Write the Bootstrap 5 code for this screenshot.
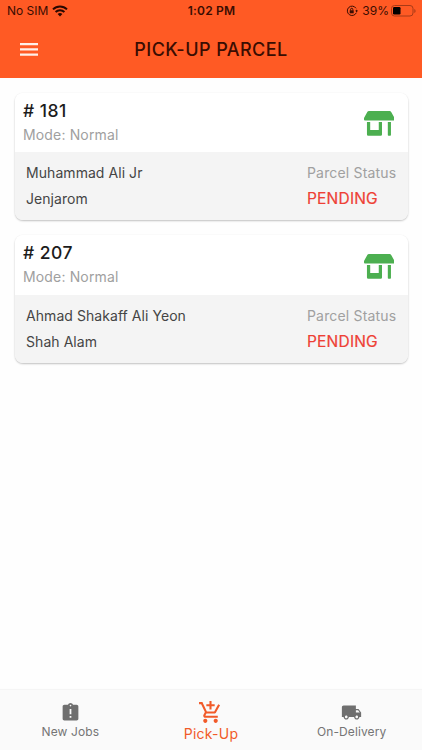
<!DOCTYPE html>
<html lang="en">
<head>
<meta charset="utf-8">
<meta name="viewport" content="width=device-width, initial-scale=1">
<title>Pick-Up Parcel</title>
<link href="https://cdn.jsdelivr.net/npm/bootstrap@5.3.0/dist/css/bootstrap.min.css" rel="stylesheet">
<style>
body{font-family:Inter,"Liberation Sans",sans-serif;background:#fefefe;height:100vh;overflow:hidden}
svg{display:block;flex:none}
.app-header{background:#ff5a24;height:77.500px;color:#3a0d02}
.status-bar{height:22px;padding:0 6px 0 7px;font-size:12px;line-height:22px}
.status-side{flex:1 1 0}
.sim{letter-spacing:0}
.clock{font-weight:600;letter-spacing:.2px}
.battery{margin-left:2px}
.title-bar{height:55px;padding:0 19.5px}
.title-bar h1{font-size:18px;font-weight:500;letter-spacing:.45px;line-height:24px}
.menu-btn{width:18.5px;border:0}
.parcels{padding:15px 14.5px 0 14.5px;gap:15px}
.parcel{border:0;border-radius:8px;overflow:hidden;height:127.5px;box-shadow:0 1px 2px rgba(0,0,0,.24),0 0 1px rgba(0,0,0,.06)}
.parcel-top{height:59.5px;padding:6px 13.5px 0 8.5px;background:#fff}
.parcel-id{font-size:17.5px;font-weight:500;line-height:24px;color:#1c1c1c;letter-spacing:.45px}
.mode{font-size:14px;line-height:24px;color:#a0a0a0;letter-spacing:.15px}
.parcel-info{flex:1;background:#f4f4f4;padding:8px 10.5px 0 11.5px;font-size:14px;line-height:26px;letter-spacing:.06px;color:#454545}
.shop{margin-top:12.5px}
.status-col{width:90px;white-space:nowrap}
.status-label{color:#a0a0a0;letter-spacing:.17px}
.pending{color:#ee4035;font-size:15.5px;font-weight:400;letter-spacing:.2px;-webkit-text-stroke:.2px #ee4035}
.tabs{height:60px;background:#fafafa;color:#757575;font-size:12px;letter-spacing:.1px;box-shadow:0 -1px 1px rgba(0,0,0,.035)}
.tab-item{color:inherit;line-height:16px;padding-top:12px;white-space:nowrap}
.tab-item span{margin-top:1px}
.tab-item.current{color:#f15a29;font-size:14px;letter-spacing:.25px;padding-top:9.5px}
.tab-item.current svg{margin-right:1px}
.tab-item.current span{margin-top:1px}
</style>
<script src="https://cdn.jsdelivr.net/npm/bootstrap@5.3.0/dist/js/bootstrap.bundle.min.js"></script>
</head>
<body class="d-flex flex-column">
<header class="app-header">
  <div class="status-bar d-flex align-items-center">
    <div class="status-side d-flex align-items-center gap-1">
      <span class="sim">No SIM</span>
      <svg width="16" height="12" viewBox="0 0 16 12" fill="none" stroke="#2a0800" stroke-width="2"><path d="M1 4.4a10 10 0 0 1 14 0M3.6 7a6.2 6.2 0 0 1 8.8 0"/><path d="M5.6 9.1a3.4 3.4 0 0 1 4.8 0L8 11.6z" fill="#2a0800" stroke="none"/></svg>
    </div>
    <span class="clock">1:02 PM</span>
    <div class="status-side d-flex align-items-center justify-content-end">
      <svg class="me-1" width="12" height="12" viewBox="0 0 12 12" fill="none" stroke="#3a0d02" stroke-width="1"><path d="M10 3.3A4.7 4.7 0 1 0 10.3 7.8M10.6 4.8v1.4"/><path d="M9.2 5.5h2.8l-1.4 2z" fill="#3a0d02" stroke="none"/><path d="M3.7 5.3h4v3h-4z" fill="#3a0d02" stroke="none"/><path d="M4.6 5.5V4.4a1.1 1.1 0 0 1 2.2 0v1.1"/></svg>
      <span class="percent">39%</span>
      <svg class="battery" width="25" height="12" viewBox="0 0 25 12"><rect x=".5" y=".5" width="21.5" height="10.5" rx="3" fill="none" stroke="#a83a17"/><rect x="2" y="2" width="7.5" height="7.5" rx="1.2" fill="#000"/><path d="M23.3 4v4q1.3-.6 1.3-2t-1.3-2z" fill="#a83a17"/></svg>
    </div>
  </div>
  <div class="title-bar d-flex align-items-center justify-content-between">
    <button class="menu-btn bg-transparent p-0" aria-label="Menu"><svg width="18.500" height="13" viewBox="0 0 18 13" preserveAspectRatio="none" fill="#fff0e8"><path d="M0 0h18v2.2H0zM0 5.3h18v2.2H0zM0 10.6h18v2.2H0z"/></svg></button>
    <h1 class="m-0">PICK-UP PARCEL</h1>
    <span class="menu-btn"></span>
  </div>
</header>

<main class="parcels flex-grow-1 d-flex flex-column">
  <article class="parcel card">
    <div class="parcel-top d-flex justify-content-between">
      <div><div class="parcel-id"># 181</div><div class="mode">Mode: Normal</div></div>
      <svg class="shop" width="30.500" height="25" viewBox="0 0 31 25" preserveAspectRatio="none" fill="#4caf50"><path d="M5 0h21q1 0 1.5.8L31 7v1.5q0 1-1 1H1q-1 0-1-1V7L3.500.8Q4 0 5 0zM3 11h3.300v8h8.700v-8h3.300v12.500q0 1.300-1.300 1.300H4.300Q3 24.800 3 23.500zM24.200 11h3.200v13q0 .8-.8.8h-1.600q-.8 0-.8-.8z"/></svg>
    </div>
    <div class="parcel-info d-flex justify-content-between">
      <div><div>Muhammad Ali Jr</div><div>Jenjarom</div></div>
      <div class="status-col"><div class="status-label">Parcel Status</div><div class="pending">PENDING</div></div>
    </div>
  </article>
  <article class="parcel card">
    <div class="parcel-top d-flex justify-content-between">
      <div><div class="parcel-id"># 207</div><div class="mode">Mode: Normal</div></div>
      <svg class="shop" width="30.500" height="25" viewBox="0 0 31 25" preserveAspectRatio="none" fill="#4caf50"><path d="M5 0h21q1 0 1.5.8L31 7v1.5q0 1-1 1H1q-1 0-1-1V7L3.500.8Q4 0 5 0zM3 11h3.300v8h8.700v-8h3.300v12.500q0 1.300-1.300 1.300H4.300Q3 24.800 3 23.500zM24.200 11h3.200v13q0 .8-.8.8h-1.600q-.8 0-.8-.8z"/></svg>
    </div>
    <div class="parcel-info d-flex justify-content-between">
      <div><div>Ahmad Shakaff Ali Yeon</div><div>Shah Alam</div></div>
      <div class="status-col"><div class="status-label">Parcel Status</div><div class="pending">PENDING</div></div>
    </div>
  </article>
</main>

<nav class="tabs row g-0">
  <a class="tab-item col d-flex flex-column align-items-center text-decoration-none" href="#">
    <svg width="21" height="21" viewBox="0 0 24 24" fill="#6f6f6f"><path d="M19 3h-4.180C14.400 1.840 13.300 1 12 1c-1.300 0-2.400.840-2.820 2H5c-1.100 0-2 .9-2 2v14c0 1.100.9 2 2 2h14c1.100 0 2-.9 2-2V5c0-1.100-.9-2-2-2zm-6 15h-2v-2h2v2zm0-4h-2V8h2v6zm-1-9c-.550 0-1-.450-1-1s.450-1 1-1 1 .450 1 1-.450 1-1 1z"/></svg>
    <span>New Jobs</span>
  </a>
  <a class="tab-item current col d-flex flex-column align-items-center text-decoration-none" href="#">
    <svg width="25" height="25" viewBox="0 0 24 24" fill="currentColor"><path d="M11 9h2V6h3V4h-3V1h-2v3H8v2h3v3zm-4 9c-1.100 0-1.990.9-1.990 2S5.900 22 7 22s2-.9 2-2-.9-2-2-2zm10 0c-1.100 0-1.990.9-1.990 2s.890 2 1.990 2 2-.9 2-2-.9-2-2-2zm-9.830-3.250l.030-.120.9-1.630h7.450c.750 0 1.410-.410 1.750-1.030l3.860-7.010L19.420 4h-.010l-1.100 2-2.760 5H8.530l-.130-.270L6.160 6l-.950-2-.940-2H1v2h2l3.600 7.590-1.350 2.450c-.160.280-.250.610-.250.960 0 1.100.9 2 2 2h12v-2H7.420c-.130 0-.250-.110-.250-.250z"/></svg>
    <span>Pick-Up</span>
  </a>
  <a class="tab-item col d-flex flex-column align-items-center text-decoration-none" href="#">
    <svg width="21" height="21" viewBox="0 0 24 24" fill="#6f6f6f"><path d="M20 8h-3V4H3c-1.100 0-2 .9-2 2v11h2c0 1.660 1.340 3 3 3s3-1.340 3-3h6c0 1.660 1.340 3 3 3s3-1.340 3-3h2v-5l-3-4zM6 18.500c-.830 0-1.500-.670-1.500-1.500s.670-1.500 1.500-1.500 1.500.670 1.500 1.500-.670 1.500-1.500 1.500zm13.500-9l1.960 2.500H17V9.500h2.500zm-1.500 9c-.830 0-1.500-.670-1.500-1.500s.670-1.500 1.500-1.500 1.500.670 1.500 1.500-.670 1.500-1.500 1.500z"/></svg>
    <span>On-Delivery</span>
  </a>
</nav>
</body>
</html>
